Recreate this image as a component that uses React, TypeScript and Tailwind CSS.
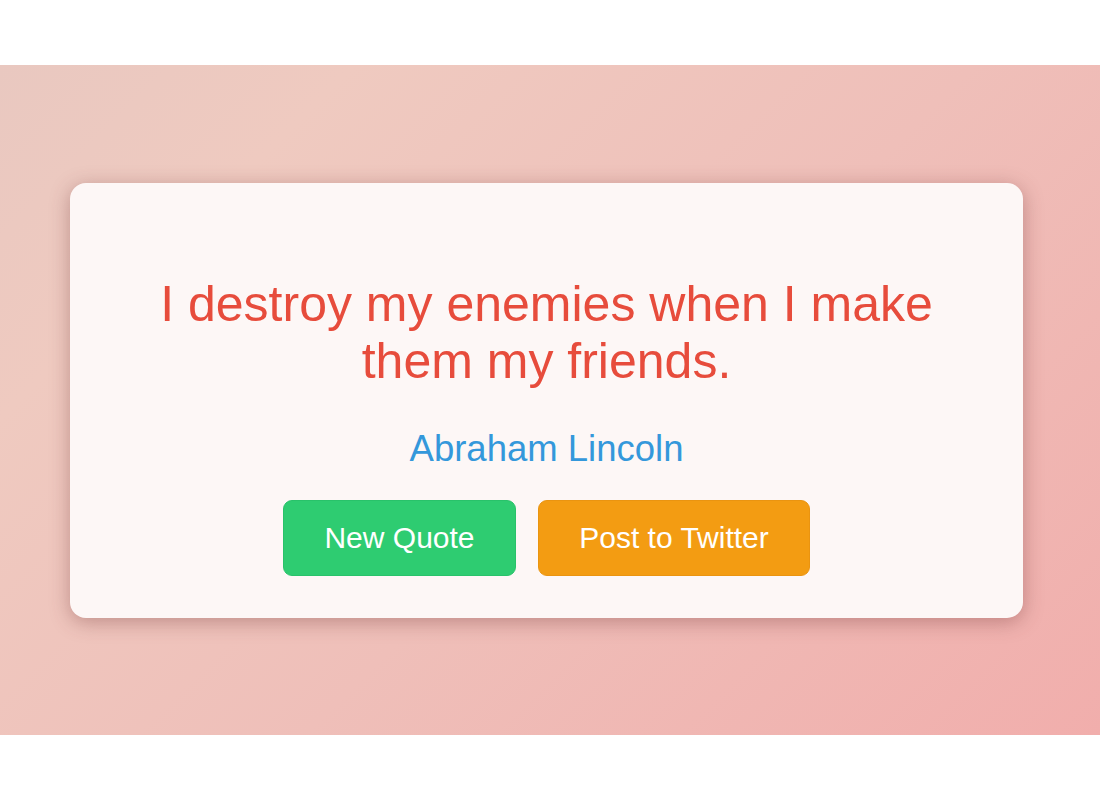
export default function App() {
  return (
    <div className="w-[1100px] h-[800px] bg-white flex flex-col" style={{ fontFamily: '"Liberation Sans", Arial, sans-serif' }}>
      <div className="mt-[65px] h-[670px] flex items-center pl-[70px] bg-[linear-gradient(135deg,#e9c8c0_0%,#efcac0_20%,#efbfb9_55%,#f1aeac_100%)]">
        <div className="w-[953px] h-[435px] rounded-[16px] bg-[#fdf7f6] shadow-[0_4px_20px_rgba(110,50,50,0.38)] flex flex-col items-center pt-[93px]">
          <p className="text-[50px] leading-[57.5px] text-[#e74c3c] text-center w-[800px]">
            I destroy my enemies when I make them my friends.
          </p>
          <p className="mt-[37px] text-[36.5px] leading-[41px] text-[#3498db]">Abraham Lincoln</p>
          <div className="mt-[31px] flex gap-[22px]">
            <button className="w-[233px] h-[76px] rounded-[9px] bg-[#2ecc71] border border-[#29c26a] text-white text-[30px]">New Quote</button>
            <button className="w-[272px] h-[76px] rounded-[9px] bg-[#f39c12] border border-[#ea9410] text-white text-[30px]">Post to Twitter</button>
          </div>
        </div>
      </div>
    </div>
  );
}
